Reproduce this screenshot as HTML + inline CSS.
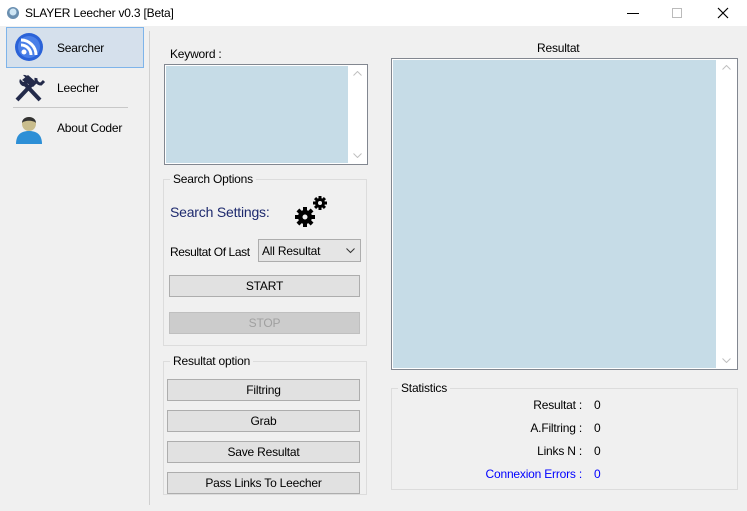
<!DOCTYPE html>
<html><head><meta charset="utf-8"><style>
*{margin:0;padding:0;box-sizing:border-box}
body{width:747px;height:511px;background:#f0f0f0;font-family:"Liberation Sans",sans-serif;font-size:12px;color:#000;position:relative;overflow:hidden;letter-spacing:-0.2px}
.a{position:absolute}
.t{position:absolute;white-space:nowrap}
.btn{position:absolute;background:#e1e1e1;border:1px solid #adadad;text-align:center;line-height:20px;font-size:12px}
.grp{position:absolute;border:1px solid #dcdcdc}
.gl{position:absolute;background:#f0f0f0;padding:0 3px;top:-8px;left:6px;font-size:12px}
.ta{position:absolute;border:1px solid #828790;background:#fff}
.ta .in{position:absolute;left:1px;top:1px;bottom:1px;background:#c6dce7}
.r{position:absolute;text-align:right;width:120px}
</style></head><body>
<div class="a" style="left:0;top:0;width:747px;height:26px;background:#fff"></div>
<svg class="a" style="left:6px;top:6px" width="14" height="14"><circle cx="7" cy="7" r="6" fill="#6a8fb0"/><circle cx="7" cy="6" r="3.5" fill="#cfe6f5"/></svg>
<div class="t" style="left:25px;top:6px;font-size:12px">SLAYER Leecher v0.3 [Beta]</div>
<div class="a" style="left:627px;top:13px;width:12px;height:1px;background:#000"></div>
<div class="a" style="left:672px;top:8px;width:10px;height:10px;border:1px solid #bbb"></div>
<svg class="a" style="left:717px;top:7px" width="12" height="12"><path d="M1 1L11 11M11 1L1 11" stroke="#000" stroke-width="1.2"/></svg>

<div class="a" style="left:6px;top:27px;width:138px;height:41px;background:#d5e0ec;border:1px solid #7eb4ea"></div>
<svg class="a" style="left:14px;top:32px" width="30" height="30"><circle cx="15" cy="15" r="14" fill="#2a62d8"/><circle cx="15" cy="15" r="11" fill="#4a7fe8"/><circle cx="10" cy="20" r="2.5" fill="#fff"/><path d="M7 13a10 10 0 0 1 10 10M7 8a15 15 0 0 1 15 15" stroke="#fff" stroke-width="3" fill="none"/></svg>
<div class="t" style="left:57px;top:41px">Searcher</div>
<svg class="a" style="left:14px;top:74px" width="32" height="28"><path d="M3 26L20 8" stroke="#232a4a" stroke-width="4"/><path d="M8 6l6-5 9 8-4 4z" fill="#232a4a"/><path d="M26 26L10 9" stroke="#232a4a" stroke-width="4"/><path d="M12 12a5 5 0 0 1-6-7l3 3 3-1 0-3-3-3a5 5 0 0 1 6 6z" fill="#232a4a"/><path d="M22 4a5 5 0 0 0 5 6l3-3" stroke="#232a4a" stroke-width="3" fill="none"/></svg>
<div class="t" style="left:57px;top:81px">Leecher</div>
<div class="a" style="left:13px;top:107px;width:115px;height:1px;background:#c8c8c8"></div>
<svg class="a" style="left:15px;top:112px" width="28" height="32"><path d="M1 32c0-10 6-13 13-13s13 3 13 13z" fill="#2d8fd6"/><circle cx="14" cy="12" r="7" fill="#c9bd8d"/><path d="M7 11c0-8 14-8 14 0c-2-3-12-3-14 0z" fill="#333"/></svg>
<div class="t" style="left:57px;top:121px">About Coder</div>
<div class="a" style="left:149px;top:31px;width:1px;height:474px;background:#d0d0d0"></div>

<div class="t" style="left:170px;top:47px">Keyword :</div>
<div class="ta" style="left:164px;top:64px;width:204px;height:101px"><div class="in" style="right:19px"></div>
<svg class="a" style="right:5px;top:6px" width="9" height="5"><path d="M0.5 4.5L4.5 0.5L8.5 4.5" stroke="#c0c0c0" fill="none"/></svg>
<svg class="a" style="right:5px;bottom:6px" width="9" height="5"><path d="M0.5 0.5L4.5 4.5L8.5 0.5" stroke="#c0c0c0" fill="none"/></svg></div>

<div class="grp" style="left:163px;top:179px;width:204px;height:167px"><div class="gl">Search Options</div></div>
<div class="t" style="left:170px;top:204px;font-size:14px;color:#1e2a6e">Search Settings:</div>
<svg class="a" style="left:294px;top:194px" width="36" height="34"><g fill="#000"><circle cx="11" cy="23" r="7"/><g transform="translate(11 23)"><rect x="-2" y="-10" width="4" height="20"/><rect x="-10" y="-2" width="20" height="4"/><rect x="-2" y="-10" width="4" height="20" transform="rotate(45)"/><rect x="-2" y="-10" width="4" height="20" transform="rotate(-45)"/></g><g transform="translate(26 9)"><circle r="5"/><rect x="-1.5" y="-7" width="3" height="14"/><rect x="-7" y="-1.5" width="14" height="3"/><rect x="-1.5" y="-7" width="3" height="14" transform="rotate(45)"/><rect x="-1.5" y="-7" width="3" height="14" transform="rotate(-45)"/></g></g><circle cx="11" cy="23" r="2.5" fill="#f0f0f0"/><circle cx="26" cy="9" r="2" fill="#f0f0f0"/></svg>
<div class="t" style="left:170px;top:245px;letter-spacing:-0.4px">Resultat Of Last</div>
<div class="a" style="left:258px;top:239px;width:103px;height:23px;background:#e5e5e5;border:1px solid #adadad"><span class="t" style="left:3px;top:4px">All Resultat</span><svg class="a" style="right:5px;top:8px" width="9" height="6"><path d="M0.5 0.5L4.5 4.5L8.5 0.5" stroke="#333" fill="none"/></svg></div>
<div class="btn" style="left:169px;top:275px;width:191px;height:22px">START</div>
<div class="btn" style="left:169px;top:312px;width:191px;height:22px;background:#cccccc;border-color:#bfbfbf;color:#a0a0a0">STOP</div>

<div class="grp" style="left:163px;top:361px;width:204px;height:134px"><div class="gl">Resultat option</div></div>
<div class="btn" style="left:167px;top:379px;width:193px;height:22px">Filtring</div>
<div class="btn" style="left:167px;top:410px;width:193px;height:22px">Grab</div>
<div class="btn" style="left:167px;top:441px;width:193px;height:22px">Save Resultat</div>
<div class="btn" style="left:167px;top:472px;width:193px;height:22px">Pass Links To Leecher</div>

<div class="t" style="left:537px;top:41px">Resultat</div>
<div class="ta" style="left:391px;top:58px;width:347px;height:312px"><div class="in" style="right:21px"></div>
<svg class="a" style="right:6px;top:6px" width="9" height="5"><path d="M0.5 4.5L4.5 0.5L8.5 4.5" stroke="#c0c0c0" fill="none"/></svg>
<svg class="a" style="right:6px;bottom:6px" width="9" height="5"><path d="M0.5 0.5L4.5 4.5L8.5 0.5" stroke="#c0c0c0" fill="none"/></svg></div>

<div class="grp" style="left:391px;top:388px;width:347px;height:102px"><div class="gl">Statistics</div></div>
<div class="r" style="left:462px;top:398px">Resultat :</div>
<div class="r" style="left:462px;top:421px">A.Filtring :</div>
<div class="r" style="left:462px;top:444px">Links N :</div>
<div class="r" style="left:462px;top:467px;color:#0000ff">Connexion Errors :</div>
<div class="t" style="left:594px;top:398px">0</div>
<div class="t" style="left:594px;top:421px">0</div>
<div class="t" style="left:594px;top:444px">0</div>
<div class="t" style="left:594px;top:467px;color:#0000ff">0</div>
</body></html>
